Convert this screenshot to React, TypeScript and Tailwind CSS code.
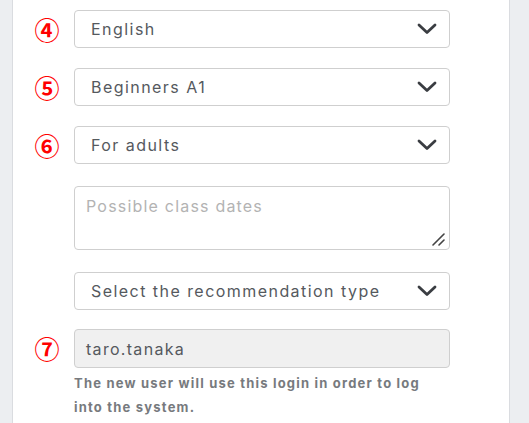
import React from "react";

const Chevron = () => (
  <svg width="20" height="12" viewBox="0 0 20 12" className="shrink-0">
    <path d="M2 2 L10 9.5 L18 2" fill="none" stroke="#3a3d42" strokeWidth="2.8" strokeLinecap="round" strokeLinejoin="round" />
  </svg>
);

const Num = ({ n }: { n: string }) => (
  <div className="w-[61px] flex justify-center pl-[7px]">
    <span className="text-[25px] leading-none text-[#ff0000] font-bold" style={{ fontFamily: '"Noto Sans CJK JP", sans-serif' }}>{n}</span>
  </div>
);

const Select = ({ label }: { label: string }) => (
  <div className="w-[376px] h-[38px] border border-[#cfcfcf] rounded-[4px] bg-white flex items-center justify-between pl-[16px] pr-[12px]">
    <span className="text-[16px] tracking-[1.45px] text-[#55595e]">{label}</span>
    <Chevron />
  </div>
);

export default function App() {
  return (
    <div className="w-[529px] h-[423px] bg-[#eceef1] flex overflow-hidden" style={{ fontFamily: 'Inter, "Open Sans", sans-serif' }}>
      <div className="ml-[12px] w-[498px] h-full bg-white border-x border-[#dadce0] flex flex-col pt-[10px]">
        <div className="flex items-center">
          <Num n="④" />
          <Select label="English" />
        </div>
        <div className="flex items-center mt-[20px]">
          <Num n="⑤" />
          <Select label="Beginners A1" />
        </div>
        <div className="flex items-center mt-[20px]">
          <Num n="⑥" />
          <Select label="For adults" />
        </div>
        <div className="flex mt-[22px]">
          <div className="w-[61px]" />
          <div className="relative w-[376px] h-[64px] border border-[#cfcfcf] rounded-[4px] bg-white pl-[11px] pt-[7px]">
            <span className="text-[16px] tracking-[1.2px] text-[#b3b3b3]">Possible class dates</span>
            <svg width="14" height="14" viewBox="0 0 14 14" className="absolute right-[3px] bottom-[3px]">
              <path d="M1 13 L12 2 M7 13 L12 8" stroke="#444" strokeWidth="1.6" strokeLinecap="round" />
            </svg>
          </div>
        </div>
        <div className="flex mt-[22px]">
          <div className="w-[61px]" />
          <Select label="Select the recommendation type" />
        </div>
        <div className="flex items-center mt-[19px]">
          <Num n="⑦" />
          <div className="w-[376px] h-[39px] border border-[#cfcfcf] rounded-[4px] bg-[#f0f0f0] flex items-center pl-[11px]">
            <span className="text-[16px] tracking-[1.3px] text-[#55595e]">taro.tanaka</span>
          </div>
        </div>
        <div className="flex mt-[3px]">
          <div className="w-[61px]" />
          <p className="w-[376px] text-[13px] leading-[24px] font-bold tracking-[1.2px] text-[#777a7e]">
            The new user will use this login in order to log into the system.
          </p>
        </div>
      </div>
    </div>
  );
}
